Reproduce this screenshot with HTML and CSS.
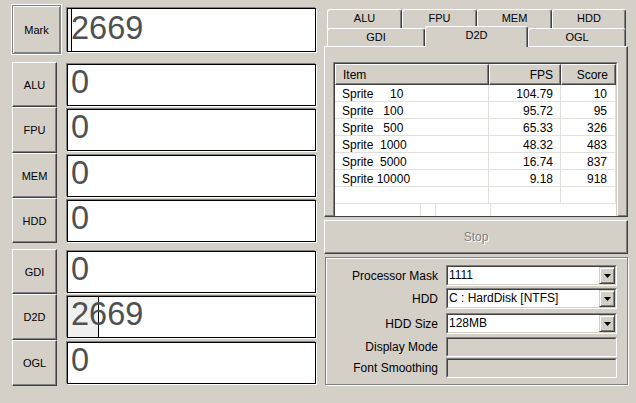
FILE: index.html
```html
<!DOCTYPE html>
<html>
<head>
<meta charset="utf-8">
<title>Benchmark</title>
<link rel="stylesheet" href="styles.css">
</head>
<body>
<div class="app">
  <div class="left">
    <div class="mark-row">
      <button class="btn btn-mark">Mark</button>
      <div class="score score-mark"><span class="fill" style="width:4px"></span><span class="num">2669</span></div>
    </div>
    <div class="group g1">
      <div class="row h45"><button class="btn">ALU</button><div class="score"><span class="num">0</span></div></div>
      <div class="row h46"><button class="btn">FPU</button><div class="score"><span class="num">0</span></div></div>
      <div class="row h45"><button class="btn">MEM</button><div class="score"><span class="num">0</span></div></div>
      <div class="row h45"><button class="btn">HDD</button><div class="score"><span class="num">0</span></div></div>
    </div>
    <div class="group g2">
      <div class="row h45"><button class="btn">GDI</button><div class="score"><span class="num">0</span></div></div>
      <div class="row h46"><button class="btn">D2D</button><div class="score"><span class="fill" style="width:31px"></span><span class="num">2669</span></div></div>
      <div class="row h46"><button class="btn">OGL</button><div class="score"><span class="num">0</span></div></div>
    </div>
  </div>

  <div class="right">
    <div class="tabs-row1">
      <div class="tab w75">ALU</div>
      <div class="tab w75">FPU</div>
      <div class="tab w75">MEM</div>
      <div class="tab w74">HDD</div>
    </div>
    <div class="tabs-row2">
      <div class="tab w98">GDI</div>
      <div class="tab tab-sel w103">D2D</div>
      <div class="tab w98">OGL</div>
    </div>
    <div class="panel">
      <div class="list">
        <div class="list-inner">
          <div class="lv-head">
            <div class="hc c1">Item</div>
            <div class="hc c2 r">FPS</div>
            <div class="hc c3 r">Score</div>
          </div>
          <div class="lv-row"><div class="cell c1">Sprite     10</div><div class="cell c2 r">104.79</div><div class="cell c3 r">10</div></div>
          <div class="lv-row"><div class="cell c1">Sprite   100</div><div class="cell c2 r">95.72</div><div class="cell c3 r">95</div></div>
          <div class="lv-row"><div class="cell c1">Sprite   500</div><div class="cell c2 r">65.33</div><div class="cell c3 r">326</div></div>
          <div class="lv-row"><div class="cell c1">Sprite  1000</div><div class="cell c2 r">48.32</div><div class="cell c3 r">483</div></div>
          <div class="lv-row"><div class="cell c1">Sprite  5000</div><div class="cell c2 r">16.74</div><div class="cell c3 r">837</div></div>
          <div class="lv-row"><div class="cell c1">Sprite 10000</div><div class="cell c2 r">9.18</div><div class="cell c3 r">918</div></div>
          <div class="lv-row"><div class="cell c1"></div><div class="cell c2"></div><div class="cell c3"></div></div>
          <div class="lv-row last"><div class="cell p1"></div><div class="cell p2"></div><div class="cell p3"></div><div class="cell p4"></div></div>
        </div>
      </div>
    </div>
    <button class="stop" disabled>Stop</button>
    <div class="opts">
      <div class="frow f1">
        <div class="flabel">Processor Mask</div>
        <div class="combo"><div class="combo-in"><span class="ctext">1111</span><span class="dd"><svg width="7" height="4" viewBox="0 0 7 4"><polygon points="0,0 7,0 3.5,4" fill="#000"/></svg></span></div></div>
      </div>
      <div class="frow f2">
        <div class="flabel">HDD</div>
        <div class="combo"><div class="combo-in"><span class="ctext">C : HardDisk [NTFS]</span><span class="dd"><svg width="7" height="4" viewBox="0 0 7 4"><polygon points="0,0 7,0 3.5,4" fill="#000"/></svg></span></div></div>
      </div>
      <div class="frow f3">
        <div class="flabel">HDD Size</div>
        <div class="combo"><div class="combo-in"><span class="ctext">128MB</span><span class="dd"><svg width="7" height="4" viewBox="0 0 7 4"><polygon points="0,0 7,0 3.5,4" fill="#000"/></svg></span></div></div>
      </div>
      <div class="frow f4">
        <div class="flabel">Display Mode</div>
        <div class="edit"><div class="edit-in"></div></div>
      </div>
      <div class="frow f5">
        <div class="flabel">Font Smoothing</div>
        <div class="edit"><div class="edit-in"></div></div>
      </div>
    </div>
  </div>
</div>
</body>
</html>
```

FILE: styles.css
```css
* { box-sizing: border-box; }
html, body { margin: 0; padding: 0; }
body {
  width: 636px;
  height: 403px;
  overflow: hidden;
  background: #d4d0c8;
  font-family: "Liberation Sans", Arial, sans-serif;
  font-size: 12px;
  color: #000;
}
.app { display: flex; }

/* ---------- left column ---------- */
.left { width: 324px; padding: 4px 0 0 11px; }
.mark-row { display: flex; align-items: flex-start; height: 51px; }

.btn {
  font-family: "Liberation Sans", Arial, sans-serif;
  font-size: 11px;
  color: #000;
  background: #d4d0c8;
  border: 1px solid;
  border-color: #fff #404040 #404040 #fff;
  box-shadow: inset -1px -1px 0 #808080;
  padding: 0;
  margin: 0 0 0 1px;
  width: 45px;
  height: 100%;
}
.btn-mark {
  width: 49px;
  height: 49px;
  margin: 1px;
  border-color: #808080;
  box-shadow: 0 0 0 1px #fff, inset 1px 1px 0 #fff, inset -1px -1px 0 #808080;
}

.score {
  position: relative;
  width: 249px;
  height: 42px;
  margin: 2px 0 0 10px;
  background: #fff;
  border: 1px solid #000;
  box-shadow: -1px -1px 0 #808080, 1px 1px 0 #fff;
  overflow: hidden;
}
.score-mark { height: 44px; margin: 4px 0 0 5px; }
.fill {
  position: absolute;
  left: 0;
  top: 0;
  bottom: 0;
  background: #f0f0f0;
  border-right: 1px solid #000;
}
.num {
  position: relative;
  display: block;
  padding: 1px 0 0 3px;
  font-size: 32.5px;
  line-height: 32px;
  color: #505050;
}
.score-mark .num { padding-top: 3px; }

.group { display: flex; flex-direction: column; }
.g1 { margin-top: 7px; }
.g2 { margin-top: 6px; }
.row { display: flex; align-items: flex-start; }
.row .btn { height: 100%; }
.h45 { height: 45px; }
.h46 { height: 46px; }

/* ---------- right column ---------- */
.right { width: 304px; display: flex; flex-direction: column; }
.tabs-row1 { display: flex; margin-top: 9px; padding-left: 3px; height: 20px; }
.tabs-row2 { display: flex; padding-left: 3px; height: 18px; align-items: flex-end; margin-top: -1px; }
.tab {
  height: 100%;
  background: #d4d0c8;
  border-top: 1px solid #fff;
  border-left: 1px solid #fff;
  border-right: 1px solid #404040;
  box-shadow: inset -1px 0 0 #808080;
  border-radius: 3px 3px 0 0;
  font-size: 11px;
  line-height: 17px;
  text-align: center;
}
.tabs-row2 .tab { height: 18px; }
.tabs-row2 .tab-sel {
  position: relative;
  z-index: 1;
  height: 21px;
  margin-bottom: -1px;
  line-height: 16px;
}
.w74 { width: 74px; }
.w75 { width: 75px; }
.w98 { width: 98px; }
.w103 { width: 103px; }

.panel {
  height: 171px;
  border: 1px solid;
  border-color: #fff #404040 #404040 #fff;
  box-shadow: inset -1px -1px 0 #808080;
  padding: 15px 0 0 8px;
  overflow: hidden;
}
.list {
  width: 285px;
  height: 170px;
  border: 1px solid;
  border-color: #808080 #fff #fff #808080;
}
.list-inner {
  height: 100%;
  border: 1px solid;
  border-color: #404040 #d4d0c8 #d4d0c8 #404040;
  background: #fff;
}
.lv-head { display: flex; height: 21px; background: #d4d0c8; }
.hc {
  border: 1px solid;
  border-color: #fff #404040 #404040 #fff;
  box-shadow: inset -1px -1px 0 #808080;
  padding: 1px 7px 0;
  line-height: 18px;
  white-space: pre;
}
.c1 { width: 154px; }
.c2 { width: 72px; }
.c3 { width: 55px; }
.r { text-align: right; }
.lv-row { display: flex; height: 17px; }
.cell {
  height: 17px;
  border-right: 1px solid #e2e0dc;
  border-bottom: 1px solid #e2e0dc;
  padding: 1px 7px 0;
  line-height: 16px;
  white-space: pre;
}
.lv-row .c3 { padding-right: 8px; }
.lv-row.last .cell { border-bottom: none; }
.p1 { width: 86px; }
.p2 { width: 13px; }
.p3 { width: 55px; }
.p4 { flex: 1; border-right: none; }

.stop {
  margin: 3px 0 0 0;
  width: 304px;
  height: 34px;
  padding: 0;
  background: #d4d0c8;
  border: 1px solid;
  border-color: #fff #404040 #404040 #fff;
  box-shadow: inset -1px -1px 0 #808080;
  font-family: "Liberation Sans", Arial, sans-serif;
  font-size: 12px;
  color: #808080;
  text-shadow: 1px 1px 0 #fff;
}

.opts {
  margin: 3px 0 0 1px;
  width: 303px;
  height: 128px;
  border: 1px solid #808080;
  box-shadow: inset 1px 1px 0 #fff, 1px 1px 0 #fff;
  padding-top: 7px;
}
.frow { display: flex; align-items: center; }
.f2 { margin-top: 2px; }
.f3 { margin-top: 4px; }
.f4 { margin-top: 3px; }
.f5 { margin-top: 1px; }
.flabel { width: 112px; text-align: right; margin-right: 8px; white-space: nowrap; }
.combo {
  width: 171px;
  height: 21px;
  border: 1px solid;
  border-color: #808080 #fff #fff #808080;
}
.combo-in {
  height: 100%;
  display: flex;
  align-items: center;
  border: 1px solid;
  border-color: #404040 #d4d0c8 #d4d0c8 #404040;
  background: #fff;
}
.ctext { flex: 1; padding-left: 1px; line-height: 17px; white-space: nowrap; }
.dd {
  width: 16px;
  height: 17px;
  display: flex;
  align-items: center;
  justify-content: center;
  background: #d4d0c8;
  border: 1px solid;
  border-color: #d4d0c8 #404040 #404040 #d4d0c8;
  box-shadow: inset 1px 1px 0 #fff, inset -1px -1px 0 #808080;
}
.dd svg { display: block; margin-top: 1px; }
.edit {
  width: 171px;
  height: 20px;
  border: 1px solid;
  border-color: #808080 #fff #fff #808080;
}
.edit-in {
  height: 100%;
  border: 1px solid;
  border-color: #404040 #d4d0c8 #d4d0c8 #404040;
  background: #d4d0c8;
}
```
